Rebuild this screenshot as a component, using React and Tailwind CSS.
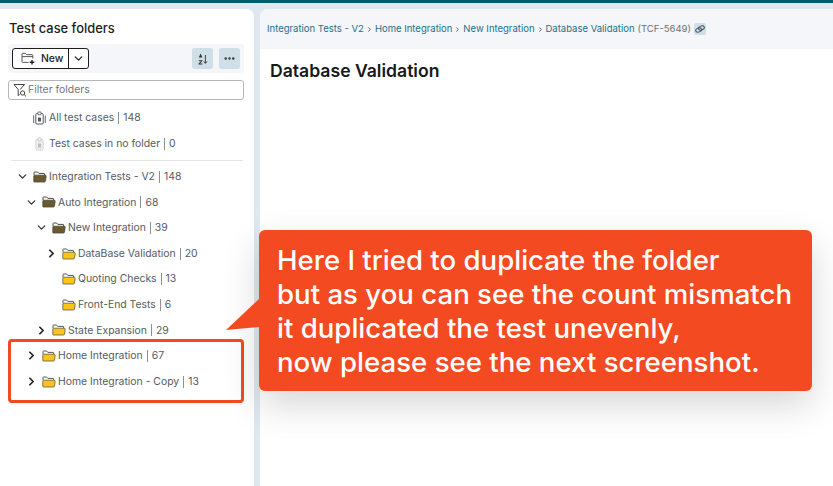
import { ChevronDown, ChevronRight, MoreHorizontal } from "lucide-react";

const FONT = "font-['Inter','Noto_Sans',sans-serif]";

function FolderOpen({ color, line }) {
  return (
    <svg width="14" height="12" viewBox="0 0 14 12" className="shrink-0">
      <path d="M1 4V1.6C1 1.2 1.3 1 1.6 1H4.6L5.8 2.4H11C11.4 2.4 11.6 2.7 11.6 3V4.6" fill="#fff" stroke={line} strokeWidth="1" />
      <path d="M0.8 10.6V4.9C0.8 4.5 1.1 4.2 1.5 4.2H12.2C12.9 4.2 13.3 4.7 13.2 5.3L12.5 10C12.4 10.6 12 11 11.4 11H1.3C1 11 0.8 10.9 0.8 10.6Z" fill={color} stroke={line} strokeWidth="0.8" />
    </svg>
  );
}

function ClipIcon({ faded }) {
  const c = faded ? "#b9bec2" : "#55595c";
  return (
    <svg width="13" height="14" viewBox="0 0 13 14" className="shrink-0">
      <rect x="2.8" y="2.5" width="7.4" height="10.5" rx="1" fill={faded ? "#eceeef" : "none"} stroke={c} strokeWidth="1" strokeDasharray={faded ? "1 1" : undefined} />
      <rect x="4.8" y="1" width="3.4" height="2.8" rx="0.8" fill="#fff" stroke={c} strokeWidth="0.9" />
      <rect x="5" y="6.5" width="3" height="4" rx="0.6" fill={c} />
      {!faded && <path d="M0.7 4.5V12M12.3 4.5V12" stroke={c} strokeWidth="0.9" />}
    </svg>
  );
}

function NewFolderIcon() {
  return (
    <svg width="14" height="13" viewBox="0 0 14 13" className="shrink-0" fill="none">
      <path d="M1 9.5V2C1 1.6 1.3 1.3 1.7 1.3H4.4L5.6 2.7H11C11.5 2.7 11.8 3 11.8 3.5V6.5" stroke="#444" strokeWidth="0.9" />
      <path d="M1 4.6H11.6M1 9.6C1 10 1.3 10.4 1.7 10.4H7.5" stroke="#444" strokeWidth="0.9" />
      <path d="M11 8V12.6M8.7 10.3H13.3" stroke="#222" strokeWidth="1.4" />
    </svg>
  );
}

function FilterIcon() {
  return (
    <svg width="14" height="14" viewBox="0 0 14 14" className="shrink-0" fill="none" stroke="#444" strokeWidth="1">
      <path d="M1 1.5H11.5L7.2 6.5" />
      <path d="M1 1.5L5.2 6.5V12.5L6.6 11.6" />
      <circle cx="9.6" cy="10" r="2.1" />
      <path d="M11.2 11.6L13 13.4" />
    </svg>
  );
}

function SortIcon() {
  return (
    <svg width="10" height="12" viewBox="0 0 10 12" fill="#333">
      <path d="M2.6 0.5L4.4 4.6H0.8Z" />
      <path d="M0.8 7.2H4.4V8L2 10.4H4.4V11.4H0.6V10.6L3 8.2H0.8Z" />
      <path d="M7.4 2V10M5.8 8.4L7.4 10.4L9 8.4" fill="none" stroke="#333" strokeWidth="0.9" />
    </svg>
  );
}

function LinkIcon() {
  return (
    <svg width="10" height="8" viewBox="0 0 10 8" fill="none" stroke="#3d4a52" strokeWidth="1">
      <ellipse cx="3.6" cy="5" rx="3" ry="2" transform="rotate(-22 3.6 5)" />
      <ellipse cx="6.4" cy="3" rx="3" ry="2" transform="rotate(-22 6.4 3)" />
    </svg>
  );
}

function Count({ name, n }) {
  return (
    <span className="flex items-center text-[10.4px] text-[#555b60] whitespace-nowrap">
      {name}
      <span className="mx-[4px] h-[12px] w-px bg-[#8b9094]" />
      {n}
    </span>
  );
}

const TREE = [
  { name: "Integration Tests - V2", n: 148, pad: "pl-[18px]", arrow: "down", open: true },
  { name: "Auto Integration", n: 68, pad: "pl-[27px]", arrow: "down", open: true },
  { name: "New Integration", n: 39, pad: "pl-[37px]", arrow: "down", open: true },
  { name: "DataBase Validation", n: 20, pad: "pl-[47px]", arrow: "right" },
  { name: "Quoting Checks", n: 13, pad: "pl-[47px]" },
  { name: "Front-End Tests", n: 6, pad: "pl-[47px]" },
  { name: "State Expansion", n: 29, pad: "pl-[37px]", arrow: "right" },
  { name: "Home Integration", n: 67, pad: "pl-[27px]", arrow: "right" },
  { name: "Home Integration - Copy", n: 13, pad: "pl-[27px]", arrow: "right" },
];

function TreeRow({ row }) {
  return (
    <div className={`flex h-[25.6px] items-center ${row.pad}`}>
      <span className="flex w-[15px] shrink-0 items-center">
        {row.arrow === "down" && <ChevronDown size={13} strokeWidth={2.4} className="-ml-[2px] text-[#333]" />}
        {row.arrow === "right" && <ChevronRight size={13} strokeWidth={3.2} className="-ml-[2px] text-[#222]" />}
      </span>
      {row.open ? <FolderOpen color="#6b5a2c" line="#4a4a44" /> : <FolderOpen color="#fcc419" line="#5a5a50" />}
      <span className="ml-[2px]">
        <Count name={row.name} n={row.n} />
      </span>
    </div>
  );
}

export default function App() {
  return (
    <div className={`relative h-[486px] w-[833px] overflow-hidden bg-[#dfe8ee] ${FONT}`}>
      <div className="h-[3px] bg-[#005a70]" />
      <div className="flex h-[483px] gap-[6px] pt-[6px]">
        {/* folders */}
        <aside className="w-[254px] shrink-0 rounded-tr-[8px] bg-white">
          <h2 className="pl-[9px] pt-[11px] text-[12.9px] leading-[18px] font-medium text-[#1c1f22]">Test case folders</h2>
          <div className="mx-[8px] mt-[6px] flex h-[29px] w-[236px] items-center justify-between rounded-[4px] bg-[#f4f6f9] px-[4px]">
            <div className="flex h-[21px] items-stretch rounded-[3px] border border-[#1f1f1f] bg-white">
              <div className="flex w-[56px] items-center gap-[6px] border-r border-[#1f1f1f] pl-[8px] text-[10.4px] font-medium text-[#222]">
                <NewFolderIcon />
                New
              </div>
              <div className="flex w-[19px] items-center justify-center">
                <ChevronDown size={13} strokeWidth={2.4} className="text-[#222]" />
              </div>
            </div>
            <div className="flex gap-[6px]">
              <button className="flex h-[21px] w-[21px] items-center justify-center rounded-[3px] bg-[#cfdfe7]">
                <SortIcon />
              </button>
              <button className="flex h-[21px] w-[21px] items-center justify-center rounded-[3px] bg-[#cfdfe7]">
                <MoreHorizontal size={13} strokeWidth={2.6} className="text-[#333]" />
              </button>
            </div>
          </div>
          <div className="mx-[8px] mt-[7px] flex h-[20px] w-[236px] items-center gap-[1px] rounded-[3px] border border-[#b4b7b9] pl-[4px] text-[10.4px] text-[#70767a]">
            <FilterIcon />
            Filter folders
          </div>
          <div className="mt-[5px] pl-[33px]">
            <div className="flex h-[26px] items-center gap-[3px]">
              <ClipIcon />
              <Count name="All test cases" n={148} />
            </div>
            <div className="flex h-[26px] items-center gap-[3px]">
              <ClipIcon faded />
              <Count name="Test cases in no folder" n={0} />
            </div>
          </div>
          <div className="mx-[11px] mt-[3px] mb-[3px] h-px bg-[#e3e6e8]" />
          {TREE.map((row) => (
            <TreeRow key={row.name} row={row} />
          ))}
        </aside>

        {/* test case */}
        <main className="flex-1 overflow-hidden rounded-tl-[8px] bg-white">
          <div className="flex h-[40px] items-center gap-[2px] bg-[#f4f6f9] pl-[7px] text-[9.5px] text-[#1f6f8b]">
            <span>Integration Tests - V2</span>
            <ChevronRight size={7} strokeWidth={3} className="text-[#3d4a52]" />
            <span>Home Integration</span>
            <ChevronRight size={7} strokeWidth={3} className="text-[#3d4a52]" />
            <span>New Integration</span>
            <ChevronRight size={7} strokeWidth={3} className="text-[#3d4a52]" />
            <span>Database Validation</span>
            <span className="ml-[1px] text-[#6b7075]">(TCF-5649)</span>
            <span className="ml-[1px] flex h-[12px] w-[12px] items-center justify-center rounded-[2px] bg-[#cfdfe7]">
              <LinkIcon />
            </span>
          </div>
          <h1 className="pl-[10px] pt-[12px] text-[17.6px] leading-[20px] font-semibold text-[#16191c]">Database Validation</h1>
        </main>
      </div>

      {/* annotation: highlight box */}
      <div className="absolute top-[339px] left-[8px] h-[64px] w-[236px] rounded-[4px] border-[3px] border-[#f44a22]" />

      {/* annotation: callout */}
      <div className="absolute top-[230px] left-[259px] h-[161px] w-[553px] rounded-[6px] bg-[#f44a22] pt-[13px] pl-[18px] text-[27.6px] leading-[34px] font-medium whitespace-nowrap text-white shadow-[0_14px_36px_rgba(0,0,0,0.16)]">
        <svg width="34" height="32" viewBox="0 0 34 32" className="absolute top-[68px] left-[-33px]">
          <path d="M34 0L0 32L34 29Z" fill="#f44a22" />
        </svg>
        <p>Here I tried to duplicate the folder</p>
        <p>but as you can see the count mismatch</p>
        <p>it duplicated the test unevenly,</p>
        <p>now please see the next screenshot.</p>
      </div>
    </div>
  );
}
